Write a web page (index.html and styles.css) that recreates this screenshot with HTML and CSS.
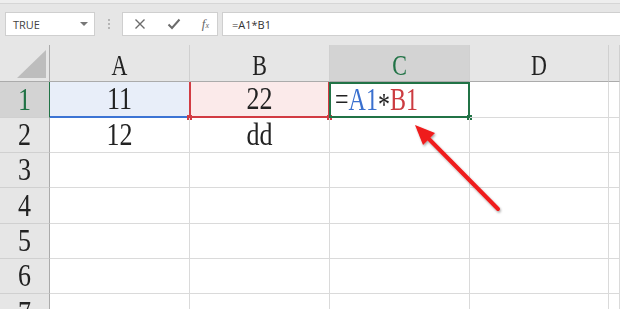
FILE: index.html
```html
<!DOCTYPE html>
<html>
<head>
    <title>Sheet - formula</title>
    <link rel="stylesheet" href="styles.css">
</head>
<body>
    <div class="toolbar">
        <div class="namebox">
            <span>TRUE</span>
            <span class="caret"></span>
        </div>
        <div class="dots"><i></i><i></i><i></i></div>
        <div class="fx-buttons">
            <svg width="12" height="12" viewBox="0 0 12 12"><path d="M1.5 1.5 L10.5 10.5 M10.5 1.5 L1.5 10.5" stroke="#6b6b6b" stroke-width="1.4" fill="none"/></svg>
            <svg width="14" height="12" viewBox="0 0 14 12"><path d="M1.5 6.5 L5 10 L12.5 1.5" stroke="#6b6b6b" stroke-width="2" fill="none"/></svg>
            <span class="fx">f<small>x</small></span>
        </div>
        <div class="formula">=A1*B1</div>
    </div>

    <div class="sheet">
        <div class="corner"></div>
        <div class="col-head"><span class="v">A</span></div>
        <div class="col-head"><span class="v">B</span></div>
        <div class="col-head active"><span class="v">C</span></div>
        <div class="col-head"><span class="v">D</span></div>
        <div class="col-head"></div>

        <div class="row-head active"><span class="v">1</span></div>
        <div class="cell ref-a"><span class="v">11</span></div>
        <div class="cell ref-b"><span class="v">22</span></div>
        <div class="cell editing"><span class="v">=<b class="blue">A1</b><b class="star">*</b><b class="red">B1</b></span></div>
        <div class="cell"></div>
        <div class="cell"></div>

        <div class="row-head"><span class="v">2</span></div>
        <div class="cell"><span class="v">12</span></div>
        <div class="cell"><span class="v">dd</span></div>
        <div class="cell"></div>
        <div class="cell"></div>
        <div class="cell"></div>

        <div class="row-head"><span class="v">3</span></div>
        <div class="cell"></div><div class="cell"></div><div class="cell"></div><div class="cell"></div><div class="cell"></div>
        <div class="row-head"><span class="v">4</span></div>
        <div class="cell"></div><div class="cell"></div><div class="cell"></div><div class="cell"></div><div class="cell"></div>
        <div class="row-head"><span class="v">5</span></div>
        <div class="cell"></div><div class="cell"></div><div class="cell"></div><div class="cell"></div><div class="cell"></div>
        <div class="row-head"><span class="v">6</span></div>
        <div class="cell"></div><div class="cell"></div><div class="cell"></div><div class="cell"></div><div class="cell"></div>
        <div class="row-head last"><span class="v">7</span></div>
        <div class="cell"></div><div class="cell"></div><div class="cell"></div><div class="cell"></div><div class="cell"></div>
    </div>

    <!-- red pointer drawn over the grid -->
    <svg class="arrow" width="620" height="309" viewBox="0 0 620 309">
        <defs>
            <filter id="shadow" x="-20%" y="-20%" width="140%" height="140%">
                <feDropShadow dx="1" dy="1.5" stdDeviation="1.2" flood-color="#000" flood-opacity="0.35"/>
            </filter>
        </defs>
        <g filter="url(#shadow)">
            <line x1="498" y1="209" x2="426" y2="136" stroke="#ef1b1b" stroke-width="4" stroke-linecap="round"/>
            <polygon points="415,125 435,133 423,145" fill="#ef1b1b"/>
        </g>
    </svg>
</body>
</html>
```

FILE: styles.css
```css
body {
    margin: 0;
    padding: 0;
    width: 620px;
    height: 309px;
    overflow: hidden;
    background-color: #ffffff;
    font-family: "Liberation Serif", serif;
}

.toolbar {
    box-sizing: border-box;
    height: 45px;
    padding: 9px 0 0 5px;
    display: flex;
    align-items: flex-start;
    background-color: #e6e6e6;
    border-top: 3px solid #eeeeee;
    box-shadow: inset 0 1px #d6d6d6;
    font-family: "Open Sans", "Liberation Sans", sans-serif;
    font-size: 11px;
    color: #444444;
}

.namebox {
    box-sizing: border-box;
    width: 90px;
    height: 24px;
    padding: 0 0 0 7px;
    display: flex;
    align-items: center;
    justify-content: space-between;
    background-color: #ffffff;
    border: 1px solid #cfcfcf;
}

.caret {
    width: 0;
    height: 0;
    margin-right: 6px;
    border-left: 4px solid transparent;
    border-right: 4px solid transparent;
    border-top: 4px solid #777777;
}

.dots {
    width: 27px;
    height: 24px;
    display: flex;
    flex-direction: column;
    align-items: center;
    justify-content: center;
    gap: 2px;
}

.dots i {
    width: 2px;
    height: 2px;
    background-color: #b5b5b5;
}

.fx-buttons {
    box-sizing: border-box;
    width: 96px;
    height: 24px;
    padding: 0 8px 0 11px;
    display: flex;
    align-items: center;
    justify-content: space-between;
    background-color: #ffffff;
    border: 1px solid #cfcfcf;
}

.fx {
    font-family: "Liberation Serif", serif;
    font-style: italic;
    font-size: 13px;
    color: #666666;
}

.fx small {
    font-size: 8px;
}

.formula {
    box-sizing: border-box;
    flex: 1;
    height: 24px;
    margin-left: 4px;
    padding-left: 9px;
    display: flex;
    align-items: center;
    background-color: #ffffff;
    border: 1px solid #cfcfcf;
    border-right: none;
    color: #333333;
}

.sheet {
    width: 620px;
    height: 264px;
    overflow: hidden;
    display: grid;
    grid-template-columns: 50px 140px 140px 140px 139px 1fr;
    grid-template-rows: 37px 36px 35px 35px 36px 35px 35px 35px;
    background-color: #ffffff;
}

.corner,
.col-head,
.row-head,
.cell {
    box-sizing: border-box;
    display: flex;
    align-items: center;
    justify-content: center;
}

/* the reference font is tall and narrow */
.v {
    display: inline-block;
    transform: scaleY(1.22);
}

.v b {
    font-weight: normal;
}

.corner {
    position: relative;
    background-color: #e6e6e6;
    border-right: 1px solid #ababab;
    border-bottom: 1px solid #ababab;
}

.corner::after {
    content: "";
    position: absolute;
    right: 3px;
    bottom: 3px;
    width: 0;
    height: 0;
    border-left: 29px solid transparent;
    border-bottom: 28px solid #bdbdbd;
}

.col-head {
    padding-top: 5px;
    background-color: #e6e6e6;
    border-right: 1px solid #d0d0d0;
    border-bottom: 1px solid #ababab;
    font-size: 22px;
    color: #222222;
}

.col-head .v {
    transform: scaleY(1.35);
}

.col-head.active {
    background-color: #d3d3d3;
    color: #217346;
}

.row-head {
    background-color: #e6e6e6;
    border-right: 1px solid #ababab;
    border-bottom: 1px solid #d0d0d0;
    font-size: 26px;
    color: #222222;
}

.row-head.last {
    align-items: flex-start;
    padding-top: 4px;
}

.row-head.active {
    background-color: #d3d3d3;
    color: #217346;
    border-right-color: #217346;
}

.cell {
    position: relative;
    border-right: 1px solid #dadada;
    border-bottom: 1px solid #dadada;
    font-size: 26px;
    color: #222222;
}

.cell.ref-a {
    background-color: #e8eef9;
    border-bottom: 2px solid #3c74d4;
}

.cell.ref-b {
    background-color: #fbeaea;
    border-left: 2px solid #d23c43;
    border-right: 2px solid #d23c43;
    border-bottom: 2px solid #d23c43;
    margin-left: -1px;
}

.cell.ref-b::before,
.cell.ref-b::after {
    content: "";
    position: absolute;
    bottom: -4px;
    width: 5px;
    height: 5px;
    background-color: #d23c43;
}

.cell.ref-b::before {
    left: -4px;
}

.cell.ref-b::after {
    right: -4px;
}

.cell.editing {
    justify-content: flex-start;
    padding-left: 4px;
    border: 2px solid #217346;
    margin-left: -1px;
    font-size: 24px;
}

.cell.editing .v {
    transform: scaleY(1.3);
}

.cell.editing::after {
    content: "";
    position: absolute;
    right: -4px;
    bottom: -4px;
    width: 5px;
    height: 5px;
    background-color: #217346;
}

.blue {
    color: #3a70cf;
}

.red {
    color: #cc3b40;
}

.star {
    position: relative;
    top: 4px;
}

.arrow {
    position: absolute;
    left: 0;
    top: 0;
    pointer-events: none;
}
```
